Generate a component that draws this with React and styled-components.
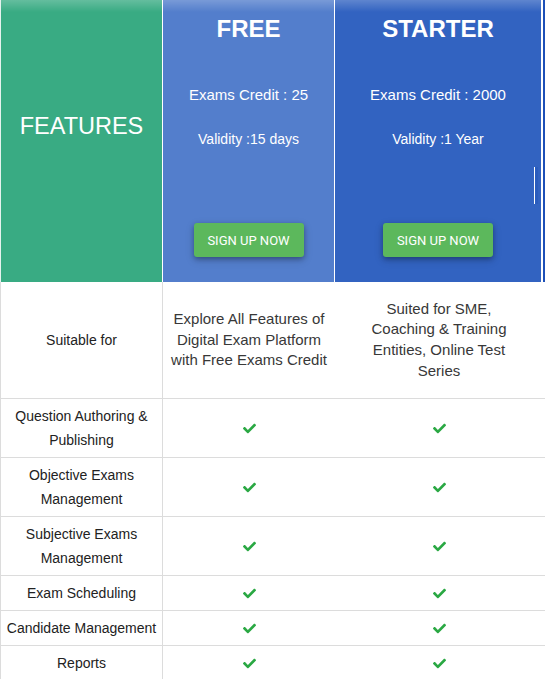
import React from 'react'
import styled, { createGlobalStyle } from 'styled-components'
import { FaCheck } from 'react-icons/fa'

const GlobalStyle = createGlobalStyle`
  html, body {
    margin: 0;
    padding: 0;
    background: #fff;
    overflow: hidden;
  }
  body {
    font-family: "Liberation Sans", Arial, sans-serif;
  }
`

const plans = [
  {
    name: 'FREE',
    credit: 'Exams Credit : 25',
    validity: 'Validity :15 days',
    bg: '#537ecc',
    desc: 'Explore All Features of Digital Exam Platform with Free Exams Credit',
    descWidth: '160px',
  },
  {
    name: 'STARTER',
    credit: 'Exams Credit : 2000',
    validity: 'Validity :1 Year',
    bg: '#3263c1',
    desc: 'Suited for SME, Coaching & Training Entities, Online Test Series',
    descWidth: '150px',
  },
]

const features = [
  'Question Authoring & Publishing',
  'Objective Exams Management',
  'Subjective Exams Management',
  'Exam Scheduling',
  'Candidate Management',
  'Reports',
]

const Pricing = () => {
  return (
    <>
      <GlobalStyle />
      <Table>
        <HeadRow>
          <FeatureHead>FEATURES</FeatureHead>
          {plans.map((p, i) => (
            <PlanHead key={p.name} $bg={p.bg} $wide={i === 1}>
              <PlanName>{p.name}</PlanName>
              <Credit>{p.credit}</Credit>
              <Validity>{p.validity}</Validity>
              <SignUp>SIGN UP NOW</SignUp>
              {i === 1 && <ScrollMark />}
            </PlanHead>
          ))}
          <NextHead />
        </HeadRow>

        <Row $first>
          <NameCell>Suitable for</NameCell>
          {plans.map((p) => (
            <ValueCell key={p.name}>
              <Desc $max={p.descWidth}>{p.desc}</Desc>
            </ValueCell>
          ))}
          <ValueCell />
        </Row>

        {features.map((f) => (
          <Row key={f}>
            <NameCell>{f}</NameCell>
            {plans.map((p) => (
              <ValueCell key={p.name}>
                <FaCheck size={13} color="#2aa843" />
              </ValueCell>
            ))}
            <ValueCell />
          </Row>
        ))}
      </Table>
    </>
  )
}

const cols = '163px 172px 208px 1fr'

const Table = styled.div`
  width: 100%;
  display: flex;
  flex-direction: column;
`

const HeadRow = styled.div`
  display: grid;
  grid-template-columns: ${cols};
  height: 282px;
`

const topShade = `linear-gradient(to bottom, rgba(255,255,255,0.22), rgba(255,255,255,0) 12px)`

const FeatureHead = styled.div`
  background: ${topShade}, #39ab83;
  border-left: 1px solid #e6f2ee;
  border-right: 1px solid #fff;
  color: #fff;
  font-size: 23.5px;
  display: flex;
  align-items: center;
  justify-content: center;
  padding-bottom: 30px;
  box-sizing: border-box;
`

const PlanHead = styled.div`
  position: relative;
  background: ${topShade}, ${(p) => p.$bg};
  border-right: ${(p) => (p.$wide ? '2px' : '1px')} solid #fff;
  color: #fff;
  display: flex;
  flex-direction: column;
  align-items: center;
  text-align: center;
`

const NextHead = styled.div`
  background: #1d50b8;
`

const PlanName = styled.div`
  margin-top: 14px;
  font-size: 24px;
  line-height: 30px;
  font-weight: bold;
`

const Credit = styled.div`
  margin-top: 41px;
  font-size: 15px;
  line-height: 20px;
`

const Validity = styled.div`
  margin-top: 24px;
  font-size: 14px;
  line-height: 20px;
`

const SignUp = styled.button`
  margin-top: 74px;
  width: 110px;
  height: 34px;
  border: none;
  border-radius: 3px;
  background: #5cb85c;
  color: #fff;
  font-family: Roboto, "Liberation Sans", sans-serif;
  font-size: 13px;
  cursor: pointer;
  box-shadow: 0 2px 5px rgba(0, 0, 0, 0.28), 0 3px 10px rgba(0, 0, 0, 0.16);
`

const ScrollMark = styled.div`
  position: absolute;
  right: 3px;
  top: 167px;
  width: 1px;
  height: 37px;
  background: #fff;
  border-right: 3px solid #2a5cbd;
`

const Row = styled.div`
  display: grid;
  grid-template-columns: ${cols};
  border-top: ${(p) => (p.$first ? 'none' : '1px solid #dcdcdc')};
  min-height: ${(p) => (p.$first ? '116px' : '0')};
`

const NameCell = styled.div`
  border-left: 1px solid #dcdcdc;
  border-right: 1px solid #dcdcdc;
  padding: 5px 4px;
  display: flex;
  align-items: center;
  justify-content: center;
  text-align: center;
  font-size: 14px;
  line-height: 24px;
  color: #222;
`

const ValueCell = styled.div`
  display: flex;
  align-items: center;
  justify-content: center;
  text-align: center;
`

const Desc = styled.div`
  max-width: ${(p) => p.$max};
  font-size: 15px;
  line-height: 20.7px;
  color: #383838;
`

export default Pricing
